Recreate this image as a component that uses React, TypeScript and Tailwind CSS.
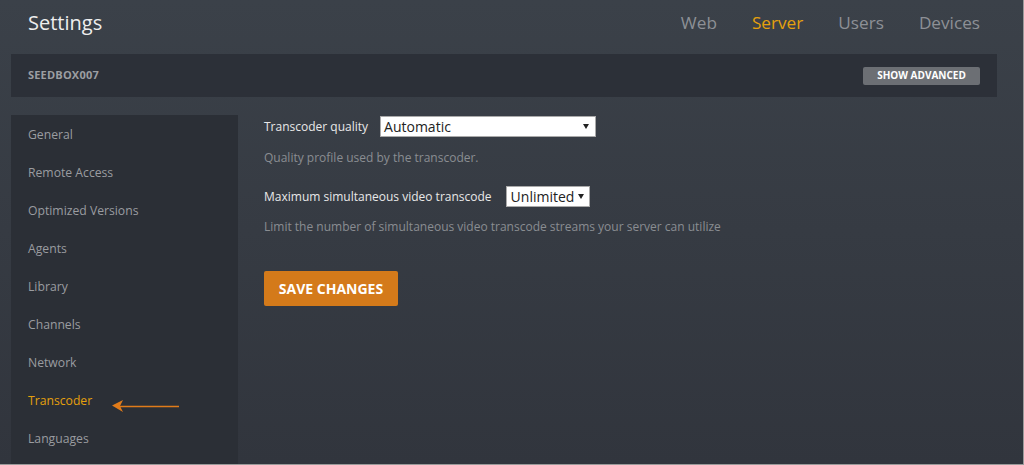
import React from "react";

const navItems = ["Web", "Server", "Users", "Devices"];
const sideItems = [
  "General",
  "Remote Access",
  "Optimized Versions",
  "Agents",
  "Library",
  "Channels",
  "Network",
  "Transcoder",
  "Languages",
];

const Caret = () => (
  <svg width="6" height="5" viewBox="0 0 6 5" className="shrink-0">
    <path d="M0 0h6L3 5z" fill="#222" />
  </svg>
);

export default function App() {
  return (
    <div
      className="flex h-[465px] w-full flex-col overflow-hidden border-r border-b border-[#9a9a9a] bg-gradient-to-b from-[#3b4149] to-[#31353d] text-[12px]"
      style={{ fontFamily: '"Open Sans", "Noto Sans", sans-serif' }}
    >
      {/* top header */}
      <div className="flex h-[54px] shrink-0 items-center justify-between pl-[28px] pr-[43px] pb-[9px]">
        <span className="text-[20px] text-[#eeeeee]">Settings</span>
        <nav className="flex gap-[35px] text-[17.2px]">
          {navItems.map((n) => (
            <span
              key={n}
              className={n === "Server" ? "text-[#e5a00d]" : "text-[#8d9096]"}
            >
              {n}
            </span>
          ))}
        </nav>
      </div>

      {/* server bar */}
      <div className="ml-[11px] mr-[26px] flex h-[43px] shrink-0 items-center justify-between bg-[#2c3038] pl-[17px] pr-[17px]">
        <span className="text-[11px] font-bold tracking-[0.2px] text-[#9c9ea2]">
          SEEDBOX007
        </span>
        <button className="flex h-[18px] w-[117px] items-center justify-center rounded-[2px] bg-[#6c6f74] text-[10px] font-bold text-white">
          SHOW ADVANCED
        </button>
      </div>

      <div className="mt-[18px] flex flex-1">
        {/* sidebar */}
        <aside className="ml-[11px] w-[227px] shrink-0 bg-[#2b2f36] pt-[1px] text-[12.2px]">
          {sideItems.map((s) => (
            <div
              key={s}
              className={`flex h-[38px] items-center pl-[17px] ${
                s === "Transcoder" ? "text-[#e5a00d]" : "text-[#9a9ca0]"
              }`}
            >
              {s}
              {s === "Transcoder" && (
                <svg
                  width="68"
                  height="14"
                  viewBox="0 0 68 14"
                  className="ml-[20px] mt-[9px]"
                >
                  <line x1="8" y1="7.5" x2="67" y2="7.5" stroke="#e07b1a" strokeWidth="1.6" />
                  <path d="M0 6.5 L11 1 L8 7 L11 13 Z" fill="#e07b1a" />
                </svg>
              )}
            </div>
          ))}
        </aside>

        {/* content */}
        <main className="flex flex-col pl-[26px] pt-[1px]">
          <div className="flex items-center gap-[12px]">
            <span className="text-[#e8e8e8]">Transcoder quality</span>
            <div className="flex h-[21px] w-[216px] items-center justify-between border border-[#aaa] bg-white pl-[3px] pr-[6px] text-[14px] text-[#222]">
              Automatic
              <Caret />
            </div>
          </div>
          <p className="mt-[12px] text-[12px] text-[#8a8d92]">
            Quality profile used by the transcoder.
          </p>

          <div className="mt-[19px] flex items-center gap-[14px]">
            <span className="text-[#e8e8e8]">Maximum simultaneous video transcode</span>
            <div className="flex h-[21px] w-[84px] items-center justify-between border border-[#aaa] bg-white pl-[4px] pr-[5px] text-[14px] text-[#222]">
              Unlimited
              <Caret />
            </div>
          </div>
          <p className="mt-[11px] text-[12px] text-[#8a8d92]">
            Limit the number of simultaneous video transcode streams your server can utilize
          </p>

          <button className="mt-[35px] flex h-[35px] w-[134px] items-center justify-center rounded-[2px] bg-[#d47a1a] text-[14px] font-bold text-white">
            SAVE CHANGES
          </button>
        </main>
      </div>
    </div>
  );
}
